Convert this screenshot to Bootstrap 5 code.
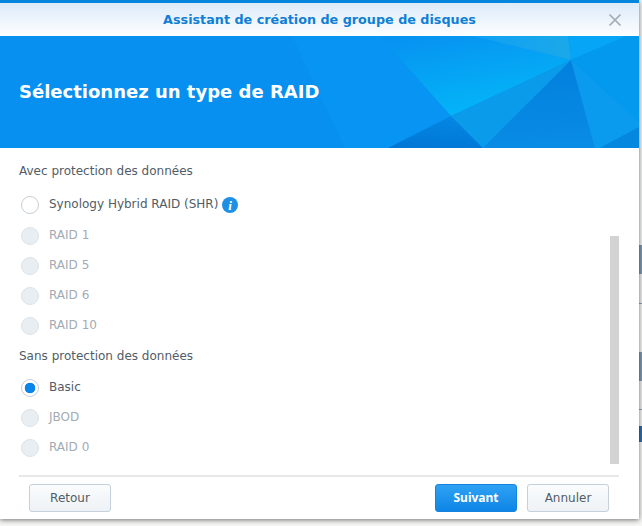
<!DOCTYPE html>
<html lang="fr">
<head>
    <meta charset="UTF-8">
    <meta name="viewport" content="width=device-width, initial-scale=1">
    <title>Assistant de création de groupe de disques</title>
    <link href="https://cdn.jsdelivr.net/npm/bootstrap@5.3.0/dist/css/bootstrap.min.css" rel="stylesheet">
    <style>
        html, body {
            height: 526px;
            overflow: hidden;
        }
        body {
            background-color: #f6f6f4;
            font-family: "DejaVu Sans", "Noto Sans", sans-serif;
            font-size: 12px;
            color: #525c66;
        }
        .page-wrap {
            height: 519px;
        }
        .wizard {
            width: 639px;
            flex: none;
            background: #fff;
            box-shadow: 0 1px 5px rgba(0, 0, 0, 0.55);
            border-top: 3px solid #0486df;
            position: relative;
        }
        .wizard-title {
            height: 33px;
            background: linear-gradient(#dcebf9, #fdfeff);
            color: #0f7fd6;
            font-size: 12.75px;
            font-weight: 700;
        }
        .wizard-close {
            position: absolute;
            top: 10px;
            right: 17px;
            width: 14px;
            height: 14px;
        }
        .wizard-banner {
            height: 112px;
            background: #0790f0;
            position: relative;
            padding-left: 19px;
        }
        .wizard-banner svg {
            position: absolute;
            left: 0;
            top: 0;
        }
        .wizard-banner h1 {
            position: relative;
            color: #fff;
            font-size: 18px;
            font-weight: 700;
            margin: 0;
        }
        .wizard-body {
            padding: 15px 19px 0;
        }
        .group-label {
            height: 17px;
            line-height: 17px;
            margin-bottom: 10px;
        }
        .radio-row {
            height: 30px;
            padding-left: 2px;
        }
        .radio-row label, .radio-row span {
            margin-bottom: 2px;
        }
        .first-row {
            margin-bottom: 1px;
        }
        .radio-row .form-check-input {
            width: 18px;
            height: 18px;
            margin: 0 10px 0 0;
            flex: none;
            background-color: #fff;
            border: 1px solid #c6ced5;
            opacity: 1;
        }
        .radio-row .form-check-input:disabled {
            background-color: #e9eef2;
            border-color: #dde3e8;
        }
        .radio-row .form-check-input:checked {
            background-image: radial-gradient(circle, #0a86ea 0, #0a86ea 5px, transparent 5.6px);
        }
        .radio-row.is-off {
            color: #a3abb2;
        }
        .info-dot {
            width: 16px;
            height: 16px;
            margin-left: 4px;
        }
        .second-group {
            margin-top: 7px;
            margin-bottom: 8px;
        }
        .fake-scroll {
            position: absolute;
            left: 610px;
            top: 233px;
            width: 9px;
            height: 228px;
            background: #d3d3d3;
        }
        .wizard-foot {
            position: absolute;
            left: 19px;
            right: 20px;
            top: 472px;
            border-top: 2px solid #e6e8ea;
            padding: 7px 10px 0 10px;
        }
        .wizard-foot .btn {
            width: 82px;
            height: 28px;
            padding: 0;
            font-size: 12px;
            border-radius: 3px;
            color: #525c66;
            border: 1px solid #c5d0da;
            background: linear-gradient(#fafcfd, #eef2f6);
        }
        .wizard-foot .btn.btn-primary {
            color: #fff;
            font-family: "Noto Sans", sans-serif;
            font-weight: 700;
            border-color: #1583dc;
            background: linear-gradient(#2fa2f3, #0d85e6);
        }
        .foot-gap {
            margin-left: 10px;
        }
        .back-strip {
            flex: 1;
            min-width: 0;
        }
        .back-strip div {
            flex: none;
        }
        .strip-a { height: 245px; background: #f4f5f5; }
        .strip-b { height: 29px; background: #7d9ab3; }
        .strip-c { height: 29px; background: #efefef; }
        .strip-d { height: 1px; background: #8fa3b5; }
        .strip-e { height: 48px; background: #f6f6f4; }
        .strip-f { height: 28px; background: #efefef; }
        .strip-g { height: 16px; background: #f6f6f4; }
        .strip-h { height: 16px; background: #2f6fae; }
    </style>
</head>
<body>

<div class="page-wrap d-flex">
    <div class="wizard">
        <div class="wizard-title d-flex align-items-center justify-content-center">
            Assistant de création de groupe de disques
        </div>
        <svg class="wizard-close" viewBox="0 0 14 14">
            <path d="M1.5 1.5 12.5 12.5M12.5 1.5 1.5 12.5" stroke="#a4abb2" stroke-width="1.7" fill="none"/>
        </svg>

        <div class="wizard-banner d-flex align-items-center">
            <svg width="639" height="112" viewBox="0 0 639 112">
                <defs>
                    <linearGradient id="glow" x1="0.15" y1="0" x2="0.55" y2="0.95">
                        <stop offset="0" stop-color="#0792f1"/>
                        <stop offset="0.5" stop-color="#05a4f4"/>
                        <stop offset="1" stop-color="#04b5f8"/>
                    </linearGradient>
                    <linearGradient id="dark" x1="0.6" y1="0" x2="0.4" y2="1">
                        <stop offset="0" stop-color="#0587e3"/>
                        <stop offset="1" stop-color="#0077d7"/>
                    </linearGradient>
                    <linearGradient id="deep" x1="0.5" y1="0" x2="0.6" y2="1">
                        <stop offset="0" stop-color="#0180dc"/>
                        <stop offset="1" stop-color="#098ce5"/>
                    </linearGradient>
                    <linearGradient id="cap" x1="0" y1="0" x2="1" y2="0">
                        <stop offset="0" stop-color="#10a0f4"/>
                        <stop offset="1" stop-color="#1ba9e9"/>
                    </linearGradient>
                </defs>
                <polygon points="292,0 473,0 571,24 451,80 388,112 345,112" fill="#0794f2"/>
                <polygon points="380,0 473,0 571,24 451,80" fill="url(#glow)"/>
                <polygon points="473,0 568,0 571,24" fill="url(#cap)"/>
                <polygon points="568,0 627,0 571,24" fill="#06a5f6"/>
                <polygon points="627,0 639,0 639,86 571,24" fill="#0399ef"/>
                <polygon points="451,80 388,112 483,112" fill="url(#dark)"/>
                <polygon points="451,80 483,112 571,24" fill="#0a9bea"/>
                <polygon points="571,24 483,112 595,112" fill="url(#deep)"/>
                <polygon points="571,24 595,112 600,112 639,91 639,86" fill="#0a9bee"/>
                <polygon points="600,112 639,112 639,91" fill="#0487de"/>
            </svg>
            <h1>Sélectionnez un type de RAID</h1>
        </div>

        <div class="wizard-body">
            <div class="group-label">Avec protection des données</div>
            <div class="radio-row first-row d-flex align-items-center">
                <input class="form-check-input" type="radio" name="raid" id="shr">
                <label for="shr">Synology Hybrid RAID (SHR)</label>
                <svg class="info-dot" viewBox="0 0 16 16">
                    <circle cx="8" cy="8" r="8" fill="#1f8fe6"/>
                    <text x="8" y="12.5" text-anchor="middle" font-family="Liberation Serif" font-style="italic" font-weight="700" font-size="13" fill="#fff">i</text>
                </svg>
            </div>
            <div class="radio-row is-off d-flex align-items-center">
                <input class="form-check-input" type="radio" name="raid" disabled><span>RAID 1</span>
            </div>
            <div class="radio-row is-off d-flex align-items-center">
                <input class="form-check-input" type="radio" name="raid" disabled><span>RAID 5</span>
            </div>
            <div class="radio-row is-off d-flex align-items-center">
                <input class="form-check-input" type="radio" name="raid" disabled><span>RAID 6</span>
            </div>
            <div class="radio-row is-off d-flex align-items-center">
                <input class="form-check-input" type="radio" name="raid" disabled><span>RAID 10</span>
            </div>

            <div class="group-label second-group">Sans protection des données</div>
            <div class="radio-row d-flex align-items-center">
                <input class="form-check-input" type="radio" name="raid" id="basic" checked>
                <label for="basic">Basic</label>
            </div>
            <div class="radio-row is-off d-flex align-items-center">
                <input class="form-check-input" type="radio" name="raid" disabled><span>JBOD</span>
            </div>
            <div class="radio-row is-off d-flex align-items-center">
                <input class="form-check-input" type="radio" name="raid" disabled><span>RAID 0</span>
            </div>
        </div>

        <div class="fake-scroll"></div>

        <div class="wizard-foot d-flex">
            <button type="button" class="btn">Retour</button>
            <button type="button" class="btn btn-primary ms-auto">Suivant</button>
            <button type="button" class="btn foot-gap">Annuler</button>
        </div>
    </div>

    <div class="back-strip d-flex flex-column">
        <div class="strip-a"></div>
        <div class="strip-b"></div>
        <div class="strip-c"></div>
        <div class="strip-d"></div>
        <div class="strip-e"></div>
        <div class="strip-b"></div>
        <div class="strip-f"></div>
        <div class="strip-d"></div>
        <div class="strip-g"></div>
        <div class="strip-h"></div>
    </div>
</div>

<script src="https://cdn.jsdelivr.net/npm/bootstrap@5.3.0/dist/js/bootstrap.bundle.min.js"></script>
</body>
</html>
